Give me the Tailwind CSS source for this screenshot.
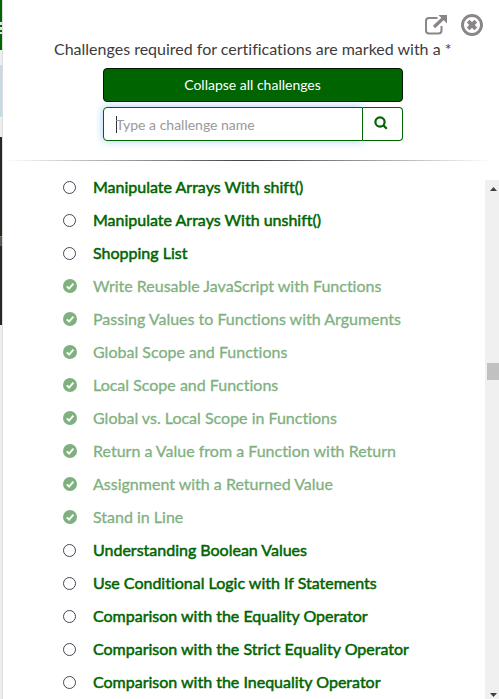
<!DOCTYPE html>
<html lang="en">
<head>
<meta charset="utf-8">
<title>Challenge map</title>
<script src="https://cdn.jsdelivr.net/npm/@tailwindcss/browser@4"></script>
</head>
<body class="flex h-[699px] w-[499px] overflow-hidden bg-white font-['Lato',sans-serif]">
<!-- Edge of the page behind the map drawer -->
<div class="flex w-[2px] shrink-0 flex-col bg-[#eeeeee]">
  <div class="h-[22px] bg-[#006400]"></div>
  <div class="flex h-[12px] flex-col justify-center gap-[3px] bg-[#dce8dc]"><i class="h-[2px] bg-[#006400]"></i><i class="h-[2px] bg-[#006400]"></i></div>
  <div class="h-[16px] bg-[#006400]"></div>
  <div class="mt-[15px] h-[52px] border-y border-[#bce8f1] bg-[#c6d9e6]"></div>
  <div class="mt-[20px] h-[99px] bg-[#272822]"></div>
  <div class="h-[10px] border-t border-[#8a6d55] bg-[#4d5a5b]"></div>
  <div class="h-[79px] bg-[#272822]"></div>
</div>
<div class="w-px shrink-0 bg-[#dddddd]"></div>
<main class="flex min-w-0 flex-1 flex-col">
  <header class="flex h-[180px] shrink-0 flex-col">
    <div class="flex h-[37px] justify-end gap-[14px] pt-[14px] pr-[16px]">
      <svg class="mt-px h-[20px] w-[22px]" viewBox="0 0 22 20" fill="none" stroke="#8b8686"><path d="M12.500 3H4Q1 3 1 6v9.500q0 3 3 3h9.500q3 0 3-3V11" stroke-width="2"/><path d="M9 12 18 3.500" stroke-width="3.200"/><path d="M13.500 0H22v8.500z" fill="#8b8686" stroke="none"/></svg>
      <svg class="h-[22px] w-[22px]" viewBox="0 0 22 22" fill="none" stroke="#8b8686"><circle cx="11" cy="11" r="9.500" stroke-width="2.900"/><path d="m7.200 7.200 7.600 7.600m0-7.600-7.600 7.600" stroke-width="4"/></svg>
    </div>
    <p class="ml-[51px] h-[24px] text-[16px] leading-[24px] whitespace-nowrap text-[#3c3c3c] [font-variant-ligatures:none]">Challenges required for certifications are marked with a *</p>
    <button class="mt-[7px] ml-[100px] h-[34px] w-[300px] rounded-[4px] border border-[#001800] bg-[#006400] pr-px pb-px text-[14px] text-white">Collapse all challenges</button>
    <div class="mt-[5px] ml-[100px] flex h-[34px] w-[300px]">
      <div class="flex w-[260px] items-center rounded-l-[4px] border border-[#006400] pl-[12px] text-[14px] text-[#999999] shadow-[0_0_8px_rgba(102,175,233,0.6)]"><i class="h-[17px] w-px bg-[#333333]"></i><span class="-ml-px pt-px">Type a challenge name</span></div>
      <div class="flex flex-1 justify-center rounded-r-[4px] border border-l-0 border-[#006400] bg-white pt-[8px] pr-[3px]">
        <svg class="h-[14px] w-[14px]" viewBox="0 0 14 14" fill="none" stroke="#006400" stroke-width="2.200"><circle cx="6" cy="6" r="4.600"/><path d="m9.300 9.300 3.500 3.500"/></svg>
      </div>
    </div>
    <div class="mt-[19px] h-px w-[490px] bg-linear-to-r from-transparent via-black/75 to-transparent"></div>
  </header>
  <section class="flex min-h-0 flex-1">
    <ul id="challenges" class="-mt-[9px] flex-1"></ul>
    <div class="flex w-[14px] flex-col items-center justify-between bg-[#f0f0f0] pt-[7px] pb-[2px]">
      <svg class="ml-[3px] h-[4px] w-[7px]" viewBox="0 0 7 4"><path d="M0 4 3.500 0 7 4z" fill="#404040"/></svg>
      <i class="mt-[-139px] mb-[3px] ml-[2px] h-[17px] w-[12px] bg-[#c1c1c1]"></i>
      <svg class="ml-[3px] h-[4px] w-[7px]" viewBox="0 0 7 4"><path d="M0 0 3.500 4 7 0z" fill="#404040"/></svg>
    </div>
  </section>
</main>
<script>
const items = [
  ['Manipulate Arrays With shift()', 0], ['Manipulate Arrays With unshift()', 0], ['Shopping List', 0],
  ['Write Reusable JavaScript with Functions', 1], ['Passing Values to Functions with Arguments', 1],
  ['Global Scope and Functions', 1], ['Local Scope and Functions', 1], ['Global vs. Local Scope in Functions', 1],
  ['Return a Value from a Function with Return', 1], ['Assignment with a Returned Value', 1], ['Stand in Line', 1],
  ['Understanding Boolean Values', 0], ['Use Conditional Logic with If Statements', 0],
  ['Comparison with the Equality Operator', 0], ['Comparison with the Strict Equality Operator', 0], ['Comparison with the Inequality Operator', 0]
];
const open = '<svg class="h-[14px] w-[14px]" viewBox="0 0 14 14"><circle cx="6.500" cy="6.500" r="6" fill="none" stroke="#333344" stroke-width="0.900"/></svg>';
const done = '<svg class="-mt-px h-[14px] w-[14px]" viewBox="0 0 14 14"><circle cx="7" cy="7" r="7" fill="#7fb17f"/><path d="m3.800 7.300 2.300 2.300 4.300-5" fill="none" stroke="#fff" stroke-width="1.900"/></svg>';
document.getElementById('challenges').innerHTML = items.map(([name, isDone]) =>
  `<li class="flex h-[33px] items-center gap-[16px] pl-[60px]">${isDone ? done : open}<span class="-mt-[2px] text-[16px] leading-[24px] whitespace-nowrap [font-variant-ligatures:none] ${isDone ? 'text-[#7fb17f] [-webkit-text-stroke:0.3px_currentColor]' : 'text-[#006400] [-webkit-text-stroke:0.5px_currentColor]'}">${name}</span></li>`).join('');
</script>
</body>
</html>
